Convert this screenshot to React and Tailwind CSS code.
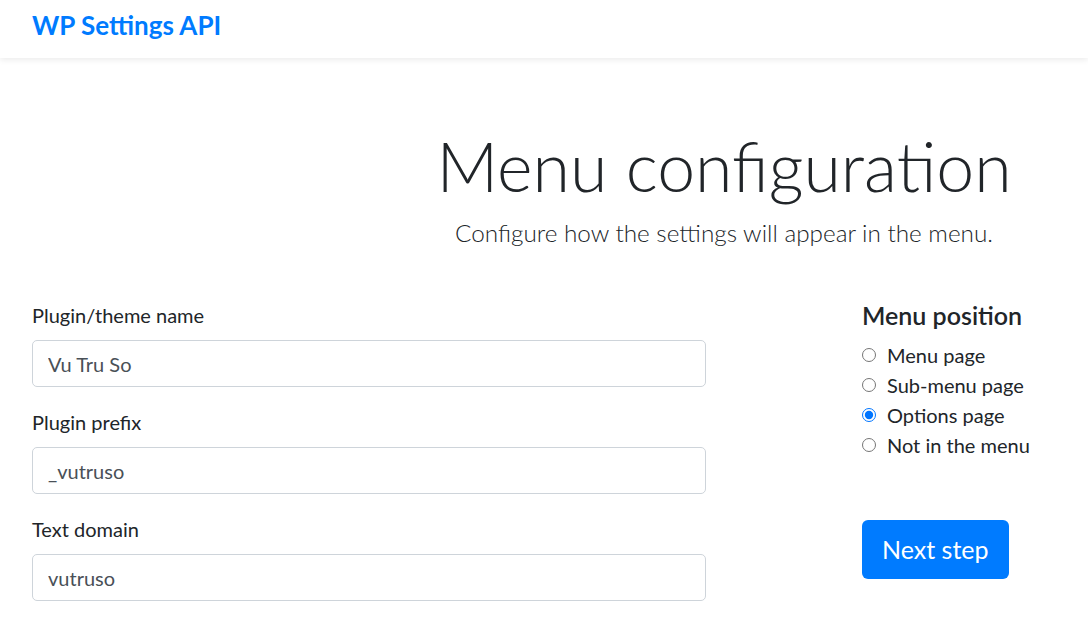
const fields = [
  { label: "Plugin/theme name", value: "Vu Tru So" },
  { label: "Plugin prefix", value: "_vutruso" },
  { label: "Text domain", value: "vutruso" },
];

const positions = ["Menu page", "Sub-menu page", "Options page", "Not in the menu"];

export default function App() {
  return (
    <div className="min-h-screen bg-white text-[#212529] font-['Lato','Open_Sans',sans-serif]">
      <nav className="h-[58px] px-8 pt-[10px] bg-white shadow-[0_2px_6px_rgba(0,0,0,0.08)]">
        <span className="block text-[26px] font-bold text-[#007bff] leading-[30px]">WP Settings API</span>
      </nav>

      <div className="ml-[360px] pt-[67px] text-center">
        <h1 className="text-[68px] font-light leading-[1.2]">Menu configuration</h1>
        <p className="text-[24.3px] font-light leading-[1.5] mt-[8px]">
          Configure how the settings will appear in the menu.
        </p>
      </div>

      <div className="flex px-8 pt-[49px]">
        <form className="w-[674px]">
          {fields.map((f) => (
            <div key={f.label} className="mb-[20px]">
              <label className="block text-[20px] leading-[30px] mb-[10px]">{f.label}</label>
              <input
                defaultValue={f.value}
                className="block w-full h-[47px] px-[15px] text-[20px] text-[#495057] border border-[#ced4da] rounded-[5px] outline-none"
              />
            </div>
          ))}
        </form>

        <div className="ml-[156px]">
          <h5 className="text-[25px] font-semibold leading-[30px] mb-[10px]">Menu position</h5>
          {positions.map((p) => (
            <label key={p} className="flex items-center h-[30px] text-[20px]">
              <input
                type="radio"
                name="position"
                defaultChecked={p === "Options page"}
                className="w-[14px] h-[14px] m-0 mr-[11px] accent-[#0075ff]"
              />
              {p}
            </label>
          ))}
          <button className="mt-[60px] h-[59px] px-[20px] bg-[#007bff] text-white text-[25px] rounded-[6px]">
            Next step
          </button>
        </div>
      </div>
    </div>
  );
}
